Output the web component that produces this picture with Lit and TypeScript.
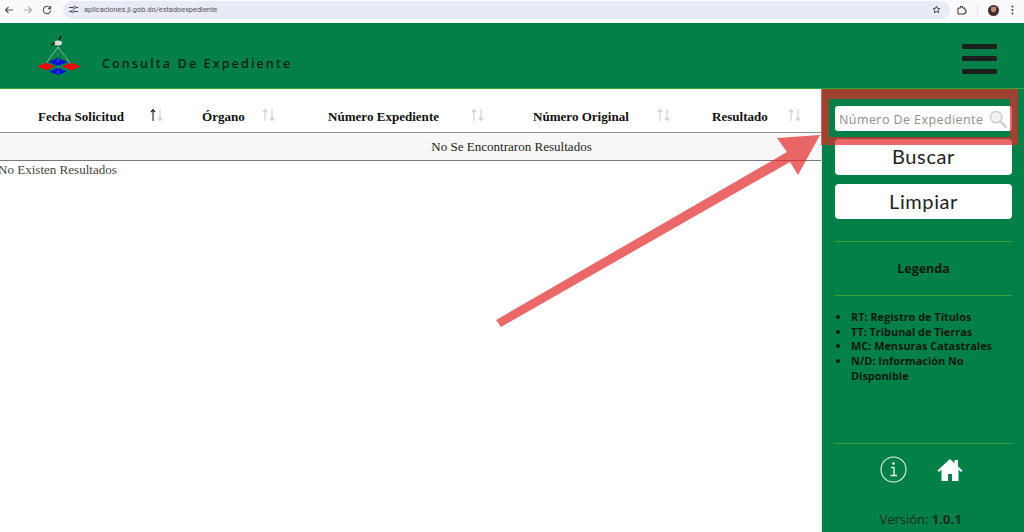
import { LitElement, html, css, svg } from "lit";
import { customElement } from "lit/decorators.js";

const COLS = [
  { label: "Fecha Solicitud", gap: 26, active: true },
  { label: "Órgano", gap: 17, active: false },
  { label: "Número Expediente", gap: 32, active: false },
  { label: "Número Original", gap: 28, active: false },
  { label: "Resultado", gap: 20, active: false },
];
const LEGEND = [
  "RT: Registro de Títulos",
  "TT: Tribunal de Tierras",
  "MC: Mensuras Catastrales",
  "N/D: Información No Disponible",
];

@customElement("app-root")
export class AppRoot extends LitElement {
  static styles = css`
    :host { display: block; width: 1024px; height: 532px; position: relative; overflow: hidden; background: #fff; font-family: "Open Sans", sans-serif; }
    .chrome { height: 19px; background: #fafafd; display: flex; align-items: center; padding-left: 4px; gap: 9px; color: #444; }
    .chrome svg { flex: none; display: block; }
    .pill { flex: 1; height: 18px; margin-right: 74px; margin-left: 2px; background: #e8eaf5; border-radius: 9px; display: flex; align-items: center; padding: 0 9px 0 6px; gap: 6px; font: 7.4px "Roboto", sans-serif; color: #555; }
    .pill span { flex: 1; }
    .tools { position: absolute; right: 10px; top: 3px; display: flex; align-items: center; gap: 10px; height: 14px; }
    .sep { width: 1px; height: 10px; background: #dde3f0; }
    .avatar { width: 11px; height: 11px; border-radius: 50%; margin-right: 2px; background: radial-gradient(circle at 50% 38%, #b98a78 0 30%, #4a2a2e 32%); }
    .spacer { height: 4px; background: #fff; }
    .top { height: 65px; background: #028048; border-bottom: 1px solid #3aa535; display: flex; align-items: center; padding-left: 36px; padding-right: 27px; }
    .logo { display: block; width: 46px; height: 42px; margin-top: 1px; flex: none; }
    .title { margin-left: 20px; margin-top: 15px; font-size: 12.5px; font-weight: 600; letter-spacing: 2.13px; color: #14201b; flex: 1; }
    .burger { width: 35px; display: flex; flex-direction: column; gap: 7.5px; margin-top: 6px; }
    .burger i { display: block; height: 5px; background: #1b1f1e; border-radius: 1.5px; }
    .main { display: flex; height: 443px; }
    .content { flex: 1; min-width: 0; font-family: "Liberation Serif", serif; color: #333; font-size: 13px; }
    .thead { height: 44px; box-sizing: border-box; display: grid; grid-template-columns: 164px 126px 205px 179px 1fr; padding-left: 38px; border-bottom: 1px solid #8f8f8f; }
    .th { display: flex; align-items: center; font-weight: 700; font-size: 13.05px; color: #111; padding-top: 13px; box-sizing: border-box; }
    .th svg { display: block; margin-top: -5px; }
    .row { height: 28px; box-sizing: border-box; background: #f8f8f8; border-bottom: 1px solid #777; display: flex; align-items: center; justify-content: center; padding-left: 202px; color: #1c1c1c; font-size: 13.05px; }
    .none { font-size: 13.05px; margin-left: -2px; line-height: 18px; color: #444; }
    .side { width: 203px; flex: none; background: #028048; border-left: 1px solid #d8e8d8; box-sizing: border-box; padding: 17px 12px 0 13px; display: flex; flex-direction: column; }
    .search { height: 25px; background: #fff; border-radius: 3px; display: flex; align-items: center; padding: 1px 5px 0 4px; box-sizing: border-box; font-size: 12.5px; letter-spacing: 0.42px; color: #8e8e8e; justify-content: space-between; white-space: nowrap; }
    .btn { background: #fff; border-radius: 4px; text-align: center; font-family: "Lato", sans-serif; font-size: 20px; letter-spacing: 0.6px; color: #222; height: 36px; line-height: 35px; }
    .b1 { margin-top: 8px; }
    .b2 { margin-top: 9px; height: 35px; }
    hr { border: 0; height: 1px; background: #3aa535; margin: 0; }
    .h1 { margin-top: 22px; }
    .legend { height: 53px; display: flex; align-items: center; justify-content: center; font-weight: 700; font-size: 12.5px; color: #0a1a12; }
    ul { margin: 14px 0 0; padding: 0 0 0 16px; font-size: 10.9px; font-weight: 700; line-height: 14.7px; color: #0a1a12; height: 133px; list-style: disc; flex: none; }
    .icons { display: flex; justify-content: center; align-items: center; gap: 30px; margin-top: 12px; padding-right: 5px; }
    .icons svg { display: block; }
    .ver { text-align: center; margin-top: 27px; padding-right: 6px; font-size: 13px; color: #1b2a24; }
    .ver b { font-weight: 700; }
    .overlay { position: absolute; left: 0; top: 0; pointer-events: none; }
  `;

  private arrows(active: boolean, gap: number) {
    const a = active ? "#222" : "#ccc";
    return html`<svg style="margin-left:${gap}px" width="13" height="14" viewBox="0 0 13 14" fill="none" stroke-width="1.1">
      <path d="M3 13V2M.9 4.2 3 1.6l2.1 2.6" stroke=${a} />
      <path d="M10 1v11M7.9 9.8 10 12.4l2.1-2.6" stroke="#ccc" />
    </svg>`;
  }

  render() {
    return html`
      <div class="chrome">
        <svg width="10" height="10" viewBox="0 0 10 10" fill="none" stroke="#555" stroke-width="1.1"><path d="M9 5H1.5M4.5 2 1.5 5l3 3"/></svg>
        <svg width="10" height="10" viewBox="0 0 10 10" fill="none" stroke="#aaa" stroke-width="1.1"><path d="M1 5h7.5M5.5 2l3 3-3 3"/></svg>
        <svg width="10" height="10" viewBox="0 0 10 10" fill="none" stroke="#555" stroke-width="1.1"><path d="M8.3 3.2A3.7 3.7 0 1 0 8.7 5.5M8.6 1v2.6H6"/></svg>
        <div class="pill">
          <svg width="9" height="9" viewBox="0 0 9 9" fill="none" stroke="#444"><path d="M0 2.5h4M7 2.5h2M0 6.5h2M5 6.5h4"/><circle cx="5.5" cy="2.5" r="1.2"/><circle cx="3.5" cy="6.5" r="1.2"/></svg>
          <span>aplicaciones.ji.gob.do/estadoexpediente</span>
          <svg width="9" height="9" viewBox="0 0 24 24" fill="none" stroke="#333" stroke-width="2.4"><path d="m12 3 2.8 5.8 6.2.9-4.5 4.4 1 6.3-5.5-3-5.500 3 1-6.3L3 9.700l6.200-.9z"/></svg>
        </div>
        <div class="tools">
          <svg width="10" height="10" viewBox="0 0 10 10" fill="none" stroke="#333"><path d="M1 3h2.500V1.500h2V3H8v2.500h1.200v2H8V9H1z"/></svg>
          <div class="sep"></div>
          <div class="avatar"></div>
          <svg width="3" height="10" viewBox="0 0 3 10" fill="#444"><circle cx="1.500" cy="1.500" r="1"/><circle cx="1.500" cy="5" r="1"/><circle cx="1.500" cy="8.500" r="1"/></svg>
        </div>
      </div>
      <div class="spacer"></div>
      <div class="top">
        <svg class="logo" viewBox="36 35 46 42">
          <path d="M58 47 44 66M58 47l14 19" stroke="#a9c9b3" stroke-width="0.8" fill="none"/>
          <path d="M58 58l9.500 4-9.500 4-9.500-4z" fill="#0a12d8"/>
          <path d="M58 68l9 3.500-9 3.500-9-3.500z" fill="#0a12d8"/>
          <path d="M37 66.500l9.500-3.800 8.500 3.800-8.500 3.800zM62 66.500l9.500-3.800 9.500 3.800-9.500 3.800z" fill="#ee0a0a"/>
          <path d="M58 47v28" stroke="#9fc4c0" stroke-width="0.6" stroke-dasharray="3 3" opacity="0.8"/>
          <ellipse cx="58" cy="43" rx="4" ry="2.500" fill="#ddd"/>
          <path d="M51 45.500 55 42.500M59 40l2-4" stroke="#111" stroke-width="1.400" fill="none"/>
        </svg>
        <div class="title">Consulta De Expediente</div>
        <div class="burger"><i></i><i></i><i></i></div>
      </div>
      <div class="main">
        <div class="content">
          <div class="thead">
            ${COLS.map((c) => html`<div class="th"><span>${c.label}</span>${this.arrows(c.active, c.gap)}</div>`)}
          </div>
          <div class="row">No Se Encontraron Resultados</div>
          <div class="none">No Existen Resultados</div>
        </div>
        <aside class="side">
          <div class="search">
            <span>Número De Expediente</span>
            <svg width="18" height="18" viewBox="0 0 19 19" fill="none" stroke="#cfcfcf"><circle cx="7.500" cy="7.500" r="6" stroke-width="1.500" fill="#f2f2f2"/><path d="m12 12 6 6" stroke-width="2.500" stroke-linecap="round"/></svg>
          </div>
          <div class="btn b1">Buscar</div>
          <div class="btn b2">Limpiar</div>
          <hr class="h1" />
          <div class="legend">Legenda</div>
          <hr />
          <ul>${LEGEND.map((l) => html`<li>${l}</li>`)}</ul>
          <hr />
          <div class="icons">
            <svg width="27" height="27" viewBox="0 0 27 27" fill="none" stroke="#e6f2ea"><circle cx="13.500" cy="13.500" r="12.500" stroke-width="1.100"/><path d="M11 11.500h3v8M10.500 19.500h6.500" stroke-width="1.400"/><circle cx="13.500" cy="7.500" r="1.300" fill="#e6f2ea" stroke="none"/></svg>
            <svg width="26" height="24" viewBox="0 0 26 24" fill="#fff"><path d="M13 1 0.500 12.500 2 14l2.500-2.200V23h6.500v-7h4v7h6.500V11.800L24 14l1.500-1.500L21 8.400V2h-3.500v3.200z"/></svg>
          </div>
          <div class="ver">Versión: <b>1.0.1</b></div>
        </aside>
      </div>
      <svg class="overlay" width="1024" height="532" viewBox="0 0 1024 532">
        ${svg`<path fill-rule="evenodd" fill="rgb(225,40,40)" fill-opacity="0.7" d="M821 89H1018V145H821zM829 99V137H1010V99z"/>
        <path fill="rgb(225,40,40)" fill-opacity="0.7" d="M496 320 787 152 777 138 820 135 798 175 790 162 501 327z"/>`}
      </svg>
    `;
  }
}
